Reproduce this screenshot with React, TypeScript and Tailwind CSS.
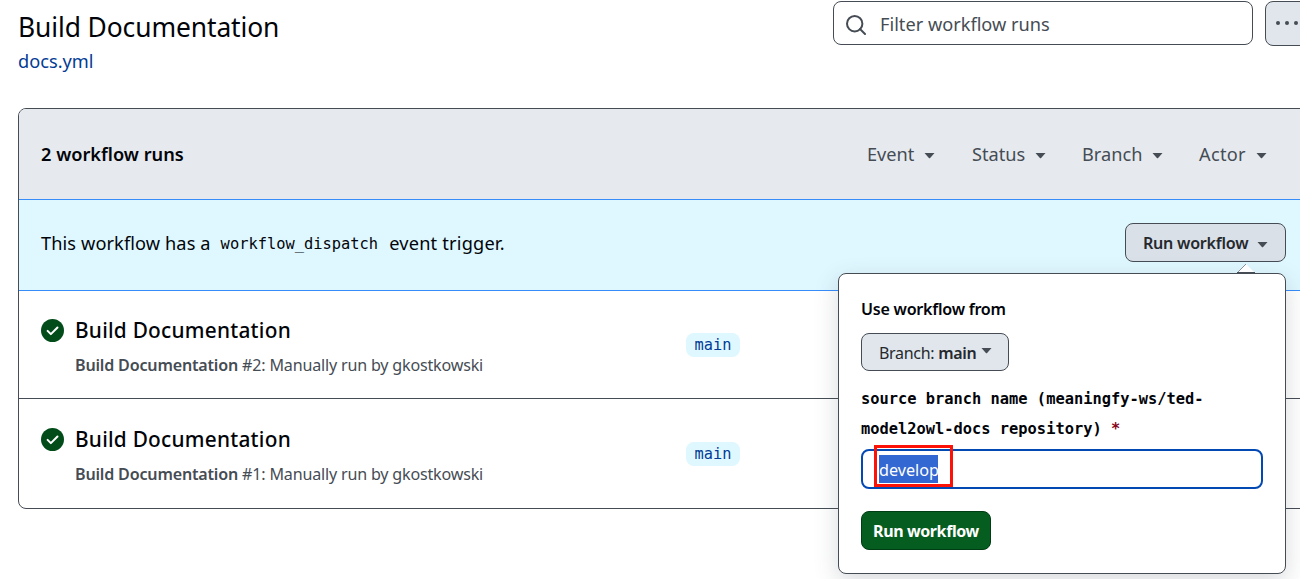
import React from "react";

const Caret = ({ className = "" }: { className?: string }) => (
  <svg viewBox="0 0 11 6" className={"h-[6px] w-[11px] shrink-0 " + className} fill="currentColor">
    <path d="M0.5 0h10L6.1 5a.8.8 0 0 1-1.2 0Z" />
  </svg>
);

const filters = [
  { label: "Event", cls: "w-[105px]" },
  { label: "Status", cls: "w-[110px]" },
  { label: "Branch", cls: "w-[117px]" },
  { label: "Actor", cls: "w-[101px] tracking-[0.3px]" },
];

function Run({ number, last }: { number: number; last?: boolean }) {
  return (
    <div className={last ? "flex h-[109px] pl-[22px] pt-[28px]" : "flex h-[108px] border-b border-[#454c54] pl-[22px] pt-[27px]"}>
      <svg viewBox="0 0 24 24" className="mt-px h-[23px] w-[23px] shrink-0">
        <circle cx="12" cy="12" r="12" fill="#024c1a" />
        <path d="M6.9 12.4l3.4 3.4 6.9-6.9" fill="none" stroke="#fff" strokeWidth="2.1" strokeLinecap="round" strokeLinejoin="round" />
      </svg>
      <div className="ml-[11px] w-[611px]">
        <div className="h-6 text-[20.8px] font-medium leading-6 tracking-[0.25px] text-[#010409]">Build Documentation</div>
        <div className="mt-[11px] h-6 text-[16.1px] leading-6 tracking-[-0.19px] text-[#454c54]">
          <span className="font-semibold">Build Documentation</span> #{number}: Manually run by gkostkowski
        </div>
      </div>
      <div className="mt-[15px] flex h-[24px] w-[54px] items-center justify-center rounded-lg bg-[#dff7ff] font-['DejaVu_Sans_Mono',monospace] text-[15.3px] text-[#023b95]">
        main
      </div>
    </div>
  );
}

export default function App() {
  return (
    <div className="relative h-[579px] w-[1300px] overflow-hidden bg-white font-['Noto_Sans','Open_Sans',sans-serif] text-[18.2px] text-[#010409]">
      <div className="flex h-[108px] w-[1330px] pl-[18px]">
        <div className="w-[815px] pt-[7px]">
          <h1 className="h-10 text-[26.4px] leading-10 tracking-[-0.1px]">Build Documentation</h1>
          <div className="mt-[2px] h-6 leading-6 text-[#023b95]">docs.yml</div>
        </div>
        <div className="mt-px flex h-11 w-[420px] items-center rounded-lg border border-[#454c54] pl-3 text-[#454c54]">
          <svg viewBox="0 0 20 20" className="mt-[3px] h-5 w-5 shrink-0" fill="none" stroke="currentColor" strokeWidth="2">
            <circle cx="8.7" cy="8.7" r="7.7" />
            <path d="M14 14l5 5" strokeLinecap="round" />
          </svg>
          <span className="ml-[14px] pt-px leading-6">Filter workflow runs</span>
        </div>
        <div className="ml-3 mt-px flex h-[45px] w-[46px] gap-[5px] rounded-lg border border-[#454c54] bg-[#e0e6eb] pl-[10px] pt-[19px]">
          <span className="h-1 w-1 rounded-full bg-[#454c54]" />
          <span className="h-1 w-1 rounded-full bg-[#454c54]" />
          <span className="h-1 w-1 rounded-full bg-[#454c54]" />
        </div>
      </div>

      <div className="ml-[18px] w-[1310px] overflow-hidden rounded-lg border border-[#454c54]">
        <div className="flex h-[90px] items-center bg-[#e6eaef] pl-[22px] pt-[2px]">
          <span className="w-[826px] font-semibold">2 workflow runs</span>
          {filters.map((f) => (
            <span key={f.label} className={"flex items-center text-[#454c54] " + f.cls}>
              {f.label}
              <Caret className="ml-[10px] mt-[2px]" />
            </span>
          ))}
        </div>
        <div className="flex h-[92px] border-y border-[#368cf9] bg-[#dff7ff] pl-[22px] pt-[23px]">
          <div className="mt-px flex h-10 w-[1084px] items-center whitespace-pre">
            <span className="tracking-[0.1px]">This workflow has a</span>
            <span className="ml-[10px] mt-[2px] font-['DejaVu_Sans_Mono',monospace] text-[15.4px]">workflow_dispatch</span>
            <span className="ml-[11px] tracking-[0.2px]">event trigger.</span>
          </div>
          <button className="flex h-[39px] w-[161px] items-center rounded-lg border border-[#454c54] bg-[#dae0e7] pl-[17px] pt-px text-[16.1px] font-semibold tracking-[-0.25px] text-[#25292e]">
            Run workflow
            <Caret className="ml-[9px] mt-[3px] text-[#454c54]" />
          </button>
        </div>
        <Run number={2} />
        <Run number={1} last />
      </div>

      <div className="absolute left-[838px] top-[273px] h-[301px] w-[448px] rounded-lg border border-[#454c54] bg-white pl-[22px] pt-[23px] shadow-[0_8px_24px_rgba(66,74,83,0.2)]">
        <svg viewBox="0 0 20 11" className="absolute right-[29px] top-[-11px] h-[11px] w-5">
          <path d="M1 10L10 1l9 9Z" fill="#fff" />
          <path d="M1 10L10 1" stroke="#8b9198" strokeWidth="1" />
          <path d="M1 9.5h18" stroke="#454c54" strokeWidth="1" />
        </svg>
        <div className="h-6 text-[16.1px] font-semibold leading-6 tracking-[-0.25px]">Use workflow from</div>
        <button className="mt-3 flex h-[38px] w-[148px] items-center whitespace-pre rounded-lg border border-[#454c54] bg-[#e0e6eb] pl-[17px] pt-px text-[16px] tracking-[-0.3px] text-[#25292e]">
          Branch: <b className="font-semibold">main</b>
          <Caret className="mb-[3px] ml-[5px] text-[#454c54]" />
        </button>
        <div className="mt-[13px] font-['DejaVu_Sans_Mono',monospace] text-[15.38px] font-bold leading-[30px]">
          source branch name (meaningfy-ws/ted-
          <br />
          model2owl-docs repository) <span className="text-[#86061d]">*</span>
        </div>
        <div className="mt-[5px] flex h-10 w-[402px] items-center rounded-lg border-2 border-[#0349b4] pl-4 text-[16.2px] text-white">
          <span className="h-7 w-[59px] bg-[#3367d1] leading-[30px]">develop</span>
        </div>
        <button className="mt-[22px] flex h-[39px] w-[130px] items-center justify-center rounded-lg border border-[#013d14] bg-[#055d20] pt-px text-[16px] font-bold tracking-[-0.4px] text-white">
          Run workflow
        </button>
        <div className="absolute left-[35px] top-[171px] h-[42px] w-[79px] border-[3px] border-[#fd1208]" />
      </div>
    </div>
  );
}
